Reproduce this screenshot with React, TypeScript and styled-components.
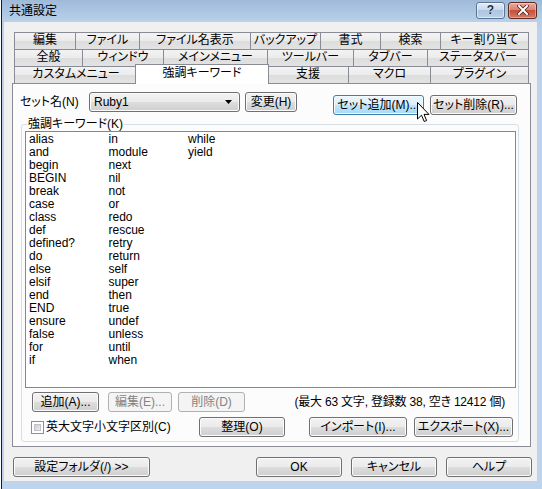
import React from 'react';
import styled, { createGlobalStyle, css } from 'styled-components';

const GlobalStyle = createGlobalStyle`
  html, body {
    margin: 0;
    padding: 0;
    background: #ffffff;
  }
  body {
    font-family: "Liberation Sans", "Noto Sans CJK JP", sans-serif;
    font-size: 12px;
    font-feature-settings: "palt" 1;
    color: #000;
  }
  * {
    box-sizing: border-box;
  }
`;

const Screen = styled.div`
  position: relative;
  width: 542px;
  height: 489px;
  overflow: hidden;
  display: flex;
  background: #ffffff;
`;

const Window = styled.div`
  flex: 1;
  margin-left: 1px;
  display: flex;
  flex-direction: column;
  border-left: 1px solid #1a1a1a;
  background: linear-gradient(#a6c0de, #bcd3eb 30px, #bdd4ec);
`;

const TitleBar = styled.div`
  height: 22px;
  display: flex;
  align-items: center;
  padding: 0 5px 0 7px;
  background: linear-gradient(#9fbad9, #b9d1ea);
`;

const Title = styled.span`
  font-size: 12px;
  line-height: 14px;
  color: #000;
`;

const CaptionButtons = styled.div`
  margin-left: auto;
  display: flex;
  gap: 3px;
  margin-top: -2px;
`;

const CaptionButton = styled.div<{ $close?: boolean }>`
  width: 29px;
  height: 17px;
  border-radius: 3px;
  display: flex;
  align-items: center;
  justify-content: center;
  ${props => props.$close
    ? css`
        border: 1px solid #5c2a24;
        background: linear-gradient(#e8a89b, #d98472 45%, #c6503c 50%, #d27a63);
        box-shadow: inset 0 0 0 1px rgba(255, 255, 255, 0.35);
      `
    : css`
        border: 1px solid #5d7594;
        background: linear-gradient(#e3ecf7, #c9d9ec 45%, #aec5e0 50%, #bcd1e9);
        box-shadow: inset 0 0 0 1px rgba(255, 255, 255, 0.5);
      `}
`;

const HelpGlyph = styled.span`
  font-family: "Liberation Sans", sans-serif;
  font-weight: bold;
  font-size: 12px;
  line-height: 12px;
  color: #1e2a3a;
  text-shadow: 0 0 1px #fff;
`;

const Client = styled.div`
  flex: 1;
  margin: 0 5px 8px 2px;
  padding: 10px 6px 0 8px;
  background: #f0f0f0;
  display: flex;
  flex-direction: column;
`;

const TabStrip = styled.div`
  display: flex;
  flex-direction: column;
  padding: 0 2px;
`;

const TabRow = styled.div`
  display: flex;
  height: 17px;
`;

const Tab = styled.div<{ $w?: number; $selected?: boolean; $last?: boolean }>`
  flex: ${props => (props.$w ? `0 0 ${props.$w}px` : '1')};
  height: 17px;
  border-top: 1px solid #898c95;
  border-left: 1px solid #898c95;
  border-right: ${props => (props.$last ? '1px solid #898c95' : 'none')};
  background: linear-gradient(#f3f3f3, #ebebeb 50%, #dddddd 51%, #e3e3e3);
  text-align: center;
  line-height: 15px;
  font-size: 12px;
  white-space: nowrap;
  ${props => props.$selected && css`
    position: relative;
    z-index: 2;
    flex: 0 0 ${(props.$w ?? 0) + 4}px;
    height: 20px;
    margin: -2px -2px 0 -2px;
    border-right: 1px solid #898c95;
    background: #ffffff;
    line-height: 17px;
  `}
`;

const Panel = styled.div`
  height: 364px;
  border: 1px solid #898c95;
  background: #fcfcfc;
  padding: 8px 7px 0 7px;
  display: flex;
  flex-direction: column;
`;

const SetRow = styled.div`
  display: flex;
  align-items: flex-start;
  height: 20px;
`;

const FieldLabel = styled.span`
  width: 69px;
  line-height: 20px;
  white-space: nowrap;
`;

const Button = styled.div<{ $w: number; $h?: number; $hover?: boolean; $disabled?: boolean }>`
  flex: 0 0 ${props => props.$w}px;
  height: ${props => props.$h ?? 20}px;
  border: 1px solid #707070;
  border-radius: 3px;
  background: linear-gradient(#f2f2f2, #ebebeb 50%, #dddddd 51%, #cfcfcf);
  box-shadow: inset 0 0 0 1px #fbfbfb;
  display: flex;
  align-items: center;
  justify-content: center;
  font-size: 12px;
  line-height: 14px;
  white-space: nowrap;
  color: #000;
  ${props => props.$hover && css`
    border-color: #3c7fb1;
    background: linear-gradient(#eaf6fd, #d9f0fc 50%, #bee6fd 51%, #a7d9f5);
    box-shadow: inset 0 0 0 1px #f4fbfe;
  `}
  ${props => props.$disabled && css`
    border-color: #adb2b5;
    background: #f4f4f4;
    box-shadow: none;
    color: #838383;
  `}
`;

const ComboBox = styled.div`
  flex: 0 0 151px;
  height: 20px;
  margin-right: 5px;
  border: 1px solid #707070;
  border-radius: 3px;
  background: linear-gradient(#f2f2f2, #ebebeb 50%, #dddddd 51%, #cfcfcf);
  box-shadow: inset 0 0 0 1px #fbfbfb;
  display: flex;
  align-items: center;
  padding: 0 7px 0 4px;
  line-height: 14px;
`;

const ComboText = styled.span`
  flex: 1;
`;

const Spacer = styled.div<{ $w: number }>`
  flex: 0 0 ${props => props.$w}px;
`;

const Group = styled.div`
  position: relative;
  margin: 12px 0 0 1px;
  width: 498px;
  height: 318px;
  border: 1px solid #d5dfe5;
  border-radius: 3px;
  padding: 6px 0 0 3px;
  display: flex;
  flex-direction: column;
`;

const GroupCaption = styled.span`
  position: absolute;
  top: -7px;
  left: 5px;
  padding: 0 1px;
  background: #fcfcfc;
  line-height: 13px;
  white-space: nowrap;
`;

const KeywordList = styled.div`
  width: 491px;
  height: 257px;
  border: 1px solid #828790;
  background: #ffffff;
  padding: 1px 0 0 3px;
  display: grid;
  grid-auto-flow: column;
  grid-template-rows: repeat(18, 13px);
  grid-auto-columns: 79.5px;
  align-content: start;
`;

const KeywordItem = styled.span`
  line-height: 13px;
  font-size: 12px;
  white-space: nowrap;
`;

const ListButtons = styled.div`
  display: flex;
  align-items: center;
  margin-top: 4px;
  padding-left: 7px;
  height: 20px;
`;

const Info = styled.span`
  margin-left: auto;
  margin-right: 13px;
  white-space: nowrap;
  line-height: 14px;
  letter-spacing: -0.2px;
`;

const OptionRow = styled.div`
  display: flex;
  align-items: center;
  margin-top: 5px;
  padding-left: 6px;
  height: 20px;
`;

const CheckArea = styled.label`
  flex: 0 0 168px;
  display: flex;
  align-items: center;
  gap: 2px;
  white-space: nowrap;
  line-height: 14px;
`;

const CheckBox = styled.span`
  width: 13px;
  height: 13px;
  border: 1px solid #8e8f8f;
  padding: 2px;
  background: #fff;
  display: flex;
`;

const CheckInner = styled.span`
  flex: 1;
  background: linear-gradient(135deg, #c9ccd1, #eeeff1);
  border: 1px solid #bfc3c8;
`;

const Footer = styled.div`
  display: flex;
  align-items: center;
  margin-top: 10px;
  padding-left: 1px;
`;

const FooterRight = styled.div`
  margin-left: auto;
  margin-right: -1px;
  display: flex;
  gap: 9px;
`;

const Cursor = styled.svg`
  position: absolute;
  left: 417px;
  top: 102px;
`;

const keywords = [
  'alias', 'and', 'begin', 'BEGIN', 'break', 'case', 'class', 'def', 'defined?',
  'do', 'else', 'elsif', 'end', 'END', 'ensure', 'false', 'for', 'if',
  'in', 'module', 'next', 'nil', 'not', 'or', 'redo', 'rescue', 'retry',
  'return', 'self', 'super', 'then', 'true', 'undef', 'unless', 'until', 'when',
  'while', 'yield',
];

type TabDef = { label: string; w?: number; selected?: boolean };

const tabRows: TabDef[][] = [
  [
    { label: '編集', w: 61 },
    { label: 'ファイル', w: 64 },
    { label: 'ファイル名表示', w: 111 },
    { label: 'バックアップ', w: 70 },
    { label: '書式', w: 60 },
    { label: '検索', w: 60 },
    { label: 'キー割り当て' },
  ],
  [
    { label: '全般', w: 68 },
    { label: 'ウィンドウ', w: 81 },
    { label: 'メインメニュー', w: 104 },
    { label: 'ツールバー', w: 86 },
    { label: 'タブバー', w: 74 },
    { label: 'ステータスバー' },
  ],
  [
    { label: 'カスタムメニュー', w: 123 },
    { label: '強調キーワード', w: 130, selected: true },
    { label: '支援', w: 81 },
    { label: 'マクロ', w: 82 },
    { label: 'プラグイン' },
  ],
];

const App: React.FC = () => {
  return (
    <Screen>
      <GlobalStyle />
      <Window>
        <TitleBar>
          <Title>共通設定</Title>
          <CaptionButtons>
            <CaptionButton>
              <HelpGlyph>?</HelpGlyph>
            </CaptionButton>
            <CaptionButton $close>
              <svg width="12" height="10" viewBox="0 0 12 10">
                <path
                  d="M2 1 L10 9 M10 1 L2 9"
                  stroke="#5a1f18"
                  strokeWidth="3.6"
                  strokeLinecap="square"
                />
                <path
                  d="M2 1 L10 9 M10 1 L2 9"
                  stroke="#ffffff"
                  strokeWidth="2"
                  strokeLinecap="square"
                />
              </svg>
            </CaptionButton>
          </CaptionButtons>
        </TitleBar>

        <Client>
          {/* タブ */}
          <TabStrip>
            {tabRows.map((row, ri) => (
              <TabRow key={ri}>
                {row.map((tab, ti) => (
                  <Tab
                    key={tab.label}
                    $w={tab.w}
                    $selected={tab.selected}
                    $last={ti === row.length - 1}
                  >
                    {tab.label}
                  </Tab>
                ))}
              </TabRow>
            ))}
          </TabStrip>

          <Panel>
            {/* セット名 */}
            <SetRow>
              <FieldLabel>セット名(N)</FieldLabel>
              <ComboBox>
                <ComboText>Ruby1</ComboText>
                <svg width="7" height="4" viewBox="0 0 7 4">
                  <path d="M0 0 H7 L3.5 4 Z" fill="#000" />
                </svg>
              </ComboBox>
              <Button $w={52}>変更(H)</Button>
              <Spacer $w={36} />
              <Button $w={91} $hover style={{ marginTop: 3 }}>セット追加(M)...</Button>
              <Spacer $w={6} />
              <Button $w={87} style={{ marginTop: 3 }}>セット削除(R)...</Button>
            </SetRow>

            {/* 強調キーワード */}
            <Group>
              <GroupCaption>強調キーワード(K)</GroupCaption>
              <KeywordList>
                {keywords.map(k => (
                  <KeywordItem key={k}>{k}</KeywordItem>
                ))}
              </KeywordList>

              <ListButtons>
                <Button $w={67}>追加(A)...</Button>
                <Spacer $w={9} />
                <Button $w={64} $disabled>編集(E)...</Button>
                <Spacer $w={6} />
                <Button $w={67} $disabled>削除(D)</Button>
                <Info>(最大 63 文字, 登録数 38, 空き 12412 個)</Info>
              </ListButtons>

              <OptionRow>
                <CheckArea>
                  <CheckBox>
                    <CheckInner />
                  </CheckBox>
                  英大文字小文字区別(C)
                </CheckArea>
                <Button $w={86}>整理(O)</Button>
                <Spacer $w={24} />
                <Button $w={98}>インポート(I)...</Button>
                <Spacer $w={7} />
                <Button $w={99}>エクスポート(X)...</Button>
              </OptionRow>
            </Group>
          </Panel>

          <Footer>
            <Button $w={137}>設定フォルダ(/) &gt;&gt;</Button>
            <FooterRight>
              <Button $w={86}>OK</Button>
              <Button $w={86}>キャンセル</Button>
              <Button $w={86}>ヘルプ</Button>
            </FooterRight>
          </Footer>
        </Client>
      </Window>

      <Cursor width="13" height="21" viewBox="0 0 13 21">
        <path
          d="M0.5 0.5 L0.5 17 L4.5 13.2 L7.2 19.5 L9.6 18.5 L7 12.4 L12 12.4 Z"
          fill="#ffffff"
          stroke="#000000"
          strokeWidth="1"
          strokeLinejoin="miter"
        />
      </Cursor>
    </Screen>
  );
};

export default App;
